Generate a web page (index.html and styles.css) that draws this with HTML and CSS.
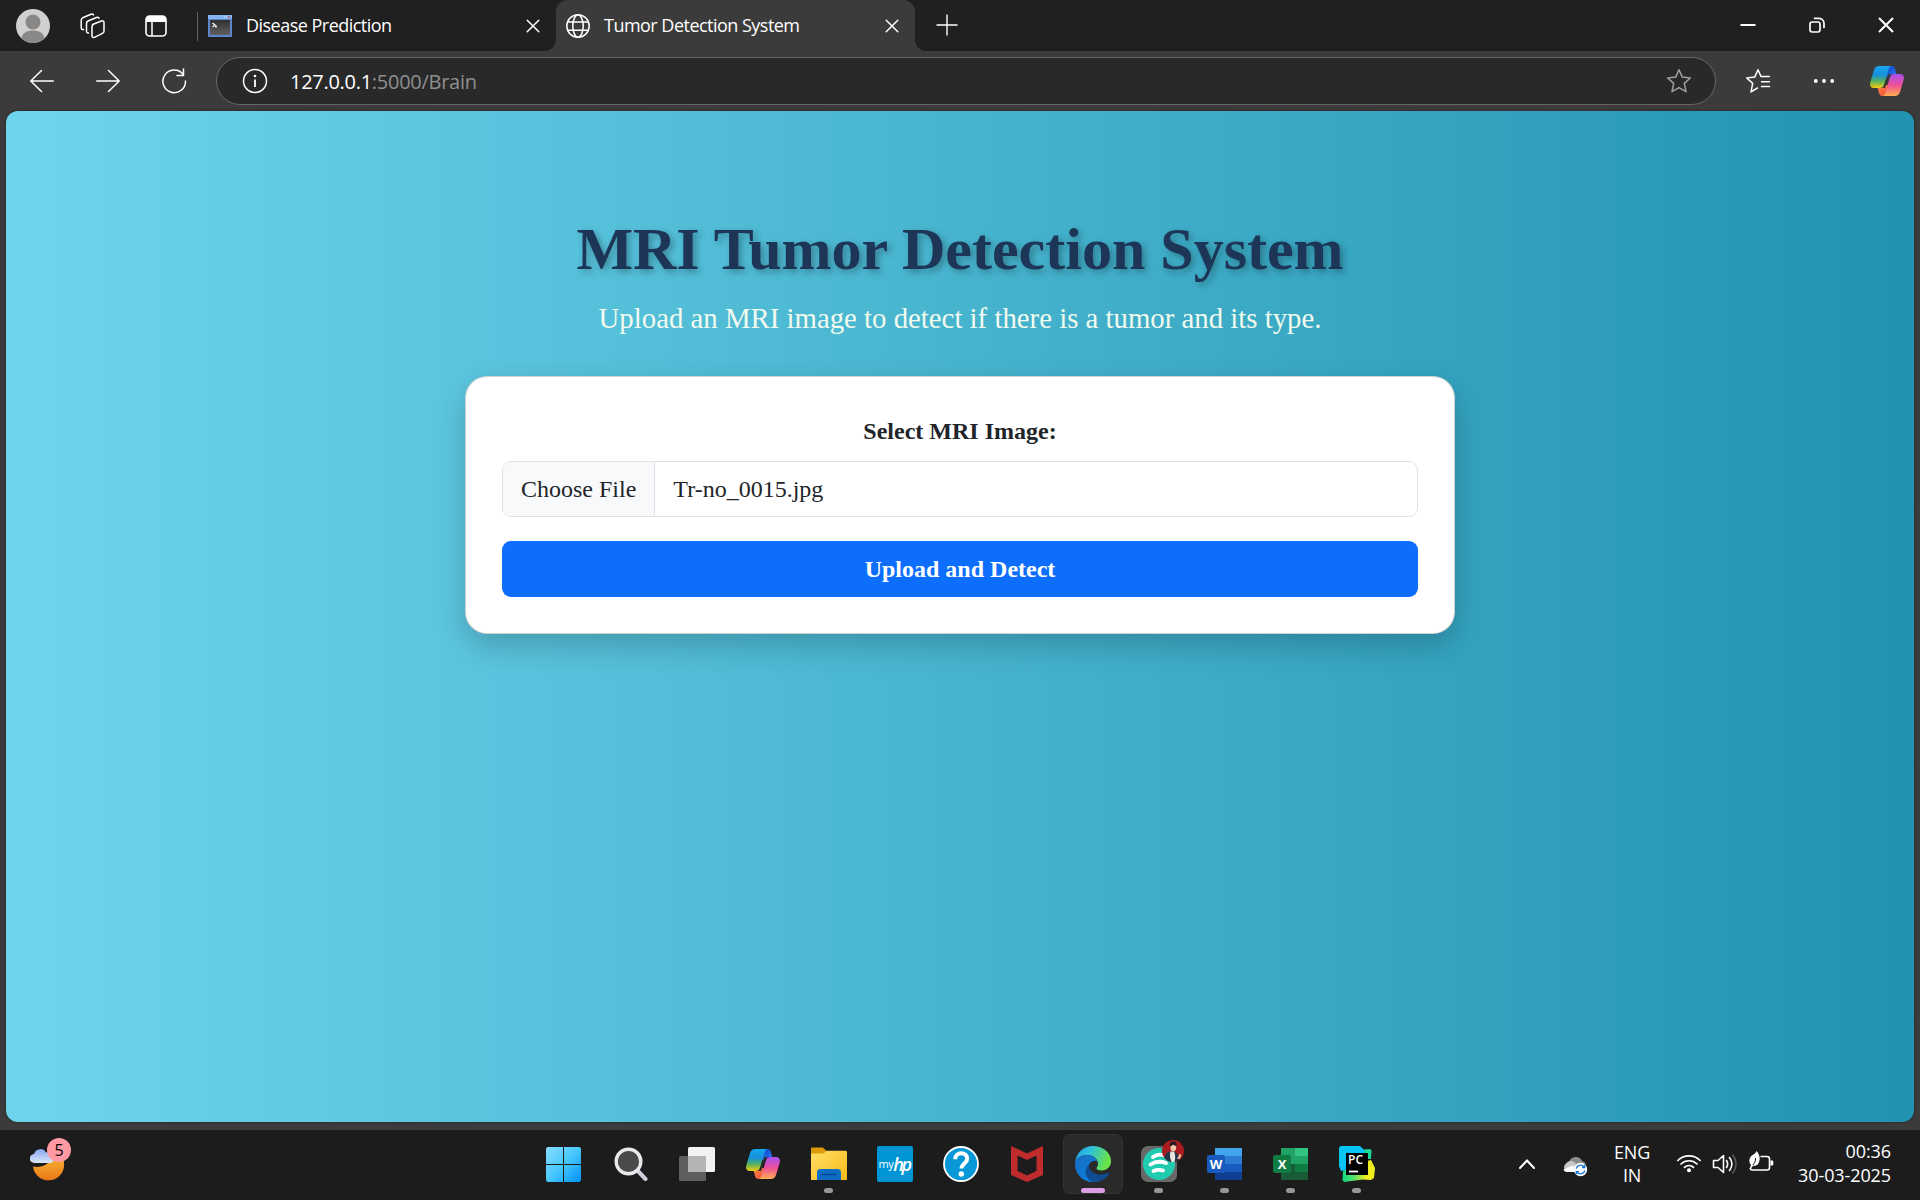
FILE: index.html
```
<!DOCTYPE html>
<html lang="en">
<head>
<meta charset="utf-8">
<title>Tumor Detection System</title>
<link rel="stylesheet" href="styles.css">
</head>
<body>
<svg class="defs" aria-hidden="true">
  <defs>
    <linearGradient id="cpA" x1="0" y1="0" x2="0" y2="1"><stop offset="0" stop-color="#16a6ee"/><stop offset=".4" stop-color="#1690dc"/><stop offset=".68" stop-color="#52b060"/><stop offset="1" stop-color="#f8cc10"/></linearGradient>
    <linearGradient id="cpB" x1="0" y1="0" x2="0" y2="1"><stop offset="0" stop-color="#a950f2"/><stop offset=".5" stop-color="#ee5098"/><stop offset="1" stop-color="#ffad4e"/></linearGradient>
    <linearGradient id="cpC" x1="0" y1="0" x2="1" y2="1"><stop offset="0" stop-color="#0a3cc8"/><stop offset="1" stop-color="#2b7df0"/></linearGradient>
    <linearGradient id="cpD" x1="0" y1="0" x2="1" y2="1"><stop offset="0" stop-color="#ff8c40"/><stop offset="1" stop-color="#ee3f3f"/></linearGradient>
    <symbol id="copilot" viewBox="0 0 34 30">
      <path fill="url(#cpC)" d="M15 0h6.500c2 0 3 1.200 3.500 3l1.300 5h-4.300c-2 0-3.200 1-3.800 3h-4z"/>
      <path fill="url(#cpD)" d="M19 30h-6.500c-2 0-3-1.200-3.500-3l-1.300-5H12c2 0 3.200-1 3.800-3h4z"/>
      <path fill="url(#cpA)" d="M9.500 0H22c-2 .2-2.800 1.500-3.400 3.500l-4.500 15c-.8 2.400-2 3.500-4.500 3.500H4c-3.500 0-4.600-2.500-3.600-6L4 4C4.900 1.300 6.500 0 9.500 0z"/>
      <path fill="url(#cpB)" d="M24.500 30H12c2-.2 2.800-1.500 3.400-3.500l4.500-15c.8-2.400 2-3.500 4.500-3.500H30c3.500 0 4.600 2.500 3.600 6L30 26c-.9 2.700-2.500 4-5.500 4z"/>
      <path fill="#333" d="M18.300 8h1.700c-.7.600-1.100 1.400-1.400 2.500L15 22h-1.200c-.3 0 .3-1 .6-2z"/>
    </symbol>
  </defs>
</svg>

<div class="browser">
  <header class="tabbar">
    <div class="tabbar-tools">
      <svg class="avatar" width="34" height="34" viewBox="0 0 34 34"><circle cx="17" cy="17" r="17" fill="#d2d0ce"/><circle cx="17" cy="13" r="7.500" fill="#8a8886"/><path d="M5.500 29.500C6 24 11 21.500 17 21.500s11 2.500 11.500 8A17 17 0 0 1 17 34 17 17 0 0 1 5.500 29.500z" fill="#8a8886"/></svg>
      <svg class="workspaces" width="26" height="26" viewBox="0 0 26 26" fill="none" stroke="#fff" stroke-width="1.500" stroke-linejoin="round" stroke-linecap="round"><path d="M12.500 11.500l9-3.500c1.500-.5 2.500.2 2.500 1.500v8.500c0 1.200-.5 1.900-1.500 2.300l-7.500 3.900c-1.600.8-3 .2-3-1.500V14c0-1.300.3-2 1.300-2.500z"/><path d="M8.500 20c-1.500.2-2-.6-2-2v-7.500c0-1.300.5-2 1.500-2.500l8.500-3.500c1-.4 2-.2 2.500.6"/><path d="M3.500 16.500c-1.600.3-2.300-.5-2.300-2V7.300c0-1.300.5-2 1.500-2.500L11 1.300c1.200-.5 2-.2 2.500.6"/></svg>
      <svg class="tabactions" width="22" height="22" viewBox="0 0 22 22"><rect x="1" y="1" width="20" height="20" rx="3.500" fill="none" stroke="#fff" stroke-width="1.600"/><path d="M1 7V4.500A3.500 3.500 0 0 1 4.500 1h13A3.500 3.500 0 0 1 21 4.500V7z" fill="#fff"/><path d="M7 7v14" stroke="#fff" stroke-width="1.500"/></svg>
    </div>
    <div class="tab tab-idle">
      <svg width="24" height="22" viewBox="0 0 24 22"><defs><linearGradient id="term" x1="0" y1="0" x2="0" y2="1"><stop offset="0" stop-color="#303030"/><stop offset="1" stop-color="#606060"/></linearGradient></defs><rect width="24" height="22" rx="1" fill="#5b86cc"/><rect width="24" height="4" rx="1" fill="#83b4f0"/><path d="M16 2h1M18 2h1" stroke="#dcebff" stroke-width="1"/><path d="M20 2h1.500" stroke="#e04a3a" stroke-width="1.500"/><rect x="2" y="5" width="20" height="15" fill="url(#term)"/><path d="M4.500 8l2.500 2-2.500 2M7 11.500h2" stroke="#fff" stroke-width="1.300" fill="none"/></svg>
      <span class="tab-title">Disease Prediction</span>
      <svg class="tab-close" width="14" height="14" viewBox="0 0 14 14" stroke="#fff" stroke-width="1.500" stroke-linecap="round"><path d="M1.200 1.200l11.600 11.600M12.800 1.200L1.200 12.800"/></svg>
    </div>
    <div class="tab tab-active">
      <svg width="24" height="24" viewBox="0 0 24 24" fill="none" stroke="#fff" stroke-width="1.500"><circle cx="12" cy="12" r="11.200"/><ellipse cx="12" cy="12" rx="5.200" ry="11.200"/><path d="M1.800 8h20.400M1.800 16.200h20.400"/></svg>
      <span class="tab-title">Tumor Detection System</span>
      <svg class="tab-close" width="14" height="14" viewBox="0 0 14 14" stroke="#fff" stroke-width="1.500" stroke-linecap="round"><path d="M1.200 1.200l11.600 11.600M12.800 1.200L1.200 12.800"/></svg>
    </div>
    <svg class="newtab" width="22" height="22" viewBox="0 0 22 22" stroke="#fff" stroke-width="1.400"><path d="M11 .5v21M.5 11h21"/></svg>
    <div class="window-buttons">
      <svg width="16" height="16" viewBox="0 0 16 16"><path d="M.5 8h15" stroke="#fff" stroke-width="2"/></svg>
      <svg width="16" height="16" viewBox="0 0 16 16" fill="none" stroke="#fff" stroke-width="1.700"><rect x="1" y="5" width="10" height="10" rx="2.200"/><path d="M5.500 1.300H10a5 5 0 0 1 5 5V10.500" stroke-linecap="round"/></svg>
      <svg width="16" height="16" viewBox="0 0 16 16" stroke="#fff" stroke-width="2"><path d="M1 1l14 14M15 1L1 15"/></svg>
    </div>
  </header>

  <nav class="toolbar">
    <div class="nav-buttons">
      <svg width="24" height="24" viewBox="0 0 24 24" fill="none" stroke="#fff" stroke-width="1.500" stroke-linecap="round" stroke-linejoin="round"><path d="M23.300 12H1M11.500 1.500L.8 12l10.700 10.500"/></svg>
      <svg width="24" height="24" viewBox="0 0 24 24" fill="none" stroke="#fff" stroke-width="1.500" stroke-linecap="round" stroke-linejoin="round"><path d="M.7 12H23M12.500 1.500L23.200 12 12.500 22.500"/></svg>
      <svg class="reload" width="26" height="26" viewBox="0 0 26 26" fill="none" stroke="#fff" stroke-width="1.500" stroke-linecap="round" stroke-linejoin="round"><path d="M22 6.300A11.300 11.300 0 1 0 24.500 13M22.500 1v6.500H16"/></svg>
    </div>
    <div class="address">
      <svg width="26" height="26" viewBox="0 0 26 26"><circle cx="13" cy="13" r="11.500" fill="none" stroke="#fff" stroke-width="1.500"/><path d="M13 11.500v7.500" stroke="#fff" stroke-width="1.800"/><circle cx="13" cy="8" r="1.300" fill="#fff"/></svg>
      <span class="url"><span class="host">127.0.0.1</span>:5000/Brain</span>
      <svg width="26" height="26" viewBox="0 0 26 26" fill="none" stroke="#a0a0a0" stroke-width="1.500" stroke-linejoin="round"><path d="M13 1.700l3.300 7.400 8 .9-6 5.400 1.700 8.300-7-4.100-7 4.100 1.700-8.300-6-5.400 8-.9z"/></svg>
    </div>
    <div class="toolbar-actions">
      <svg width="26" height="26" viewBox="0 0 26 26" fill="none" stroke="#fff" stroke-width="1.500" stroke-linejoin="round" stroke-linecap="round"><path d="M24.300 8.500H16L13 1.700 9.700 9.100l-8 .9 6 5.400L6 23.900l6.500-3.900M16.500 13.700h8M16.500 18.500h8"/></svg>
      <svg width="22" height="22" viewBox="0 0 22 22" fill="#fff"><circle cx="2.800" cy="11" r="1.900"/><circle cx="11" cy="11" r="1.900"/><circle cx="19.200" cy="11" r="1.900"/></svg>
      <svg width="34" height="30"><use href="#copilot"/></svg>
    </div>
  </nav>

  <main class="page">
    <h1>MRI Tumor Detection System</h1>
    <p class="lead">Upload an MRI image to detect if there is a tumor and its type.</p>
    <form class="card">
      <label class="form-label">Select MRI Image:</label>
      <div class="file-input"><span class="file-button">Choose File</span><span class="file-name">Tr-no_0015.jpg</span></div>
      <button class="submit" type="button">Upload and Detect</button>
    </form>
  </main>
</div>

<footer class="taskbar">
  <div class="widgets">
    <svg width="44" height="44" viewBox="0 0 44 44"><defs><linearGradient id="moon" x1="0" y1="0" x2="0" y2="1"><stop offset="0" stop-color="#f8b838"/><stop offset="1" stop-color="#ec7818"/></linearGradient><linearGradient id="cloud" x1="0" y1="0" x2="0" y2="1"><stop offset="0" stop-color="#86a8ec"/><stop offset="1" stop-color="#dce8fc"/></linearGradient></defs><path d="M31 12c2 3 3 6 3 9a15.500 15.500 0 0 1-31 3.500c9 2 19-3 19-12.500z" transform="translate(0 4)" fill="url(#moon)"/><path d="M4.500 25a4.500 4.500 0 0 1-.5-9 6.500 6.500 0 0 1 12-1.500 5.500 5.500 0 0 1 5 10.500z" fill="url(#cloud)"/></svg>
    <span class="badge">5</span>
  </div>

  <div class="apps">
    <div class="app start"><svg width="35" height="35" viewBox="0 0 35 35"><defs><linearGradient id="win" x1="0" y1="0" x2="1" y2="1"><stop offset="0" stop-color="#88dcff"/><stop offset=".5" stop-color="#48c8fc"/><stop offset="1" stop-color="#0090f8"/></linearGradient></defs><path fill="url(#win)" d="M1.500 0H17v17H0V1.500zM18 0h15.500L35 1.500V17H18zM0 18h17v17H1.500L0 33.500zM18 18h17v15.500L33.500 35H18z"/></svg></div>
    <div class="app"><svg width="34" height="36" viewBox="0 0 34 36"><path d="M22.500 23.500l9 9.500" stroke="#ccd0d8" stroke-width="4" stroke-linecap="round"/><circle cx="14.500" cy="15.500" r="12.300" fill="#4a4a4a" stroke="#e8e9ec" stroke-width="3.400"/></svg></div>
    <div class="app"><svg width="36" height="36" viewBox="0 0 36 36"><rect x="9" y="1" width="27" height="25" rx="1.500" fill="#f2f2f2"/><rect y="10" width="27" height="25" rx="1.500" fill="#5e5e5e"/><path d="M9 10h18v16H9z" fill="#b4b4b4"/></svg></div>
    <div class="app"><svg width="34" height="30"><use href="#copilot"/></svg></div>
    <div class="app running"><svg width="36" height="36" viewBox="0 0 36 36"><defs><linearGradient id="fold" x1="0" y1="0" x2="1" y2="1"><stop offset="0" stop-color="#ffe068"/><stop offset="1" stop-color="#f8b818"/></linearGradient></defs><path d="M1 1.500h10c1 0 1.500.5 2.500 1.500l2 2v10H0V2.500c0-.6.400-1 1-1z" fill="#dc9a08"/><path d="M0 7.500h11.500c1 0 1.700-.4 2.500-1.200l1.500-1.500h19c.8 0 1.500.7 1.500 1.500V33c0 .6-.4 1-1 1H1c-.6 0-1-.4-1-1z" fill="url(#fold)"/><path d="M6 34V26.500a3.500 3.500 0 0 1 3.500-3.500h17a3.500 3.500 0 0 1 3.500 3.500V34z" fill="#0f6cc4"/><path d="M11 28.500h14" stroke="#0a4a94" stroke-width="1.600" stroke-linecap="round"/></svg></div>
    <div class="app"><div class="hp"><span class="my">my</span><span class="hpmark">hp</span></div></div>
    <div class="app"><svg width="36" height="36" viewBox="0 0 36 36"><circle cx="18" cy="18" r="17" fill="#0898d8" stroke="#fff" stroke-width="1.800"/><path d="M12.200 13.300c0-3.700 2.400-6 6-6s6 2.200 6 5.500c0 4.800-5.700 4.700-5.700 9.800" fill="none" stroke="#fff" stroke-width="4"/><circle cx="18.300" cy="28" r="2.700" fill="#fff"/></svg></div>
    <div class="app"><svg width="32" height="36" viewBox="0 0 32 36"><path fill="#c02c2c" fill-rule="evenodd" d="M0 0l16 7.500L32 0v29l-16 7-16-7zM6.500 9.500v15.500L16 29.500l9.500-4.500V9.500L16 14z"/></svg></div>
    <div class="app current"><svg width="36" height="36" viewBox="0 0 36 36"><defs><linearGradient id="eg1" x1="0" y1="0" x2="1" y2=".3"><stop offset="0" stop-color="#1c9ce0"/><stop offset=".45" stop-color="#30c0dc"/><stop offset="1" stop-color="#68e448"/></linearGradient><linearGradient id="eg2" x1="0" y1="0" x2=".6" y2="1"><stop offset="0" stop-color="#1a6cc0"/><stop offset="1" stop-color="#0a80e0"/></linearGradient></defs><path d="M0 17C1 7 8 0 18 0c10.500 0 18 7 18 15 0 6-4.500 9.500-9 9.500-3.500 0-5.500-1-5.500-2.300 0-1 1.500-1.700 1.500-4.200C23 13 18.500 9 12.500 9 6 9 1.500 12 0 17z" fill="url(#eg1)"/><path d="M0 18C0 12.500 5.500 9 12 9c5.500 0 9.500 3 10.500 6.500C20 13.500 14 15 13.500 21c-.5 7 5 13.500 11 13.500A18 18 0 0 1 18 36C7.500 36 0 28 0 18z" fill="url(#eg2)"/><path d="M13.700 19c-3 2.500-4 6-3 9.500 1.200 4.500 5.300 7.500 9.300 7.500 6.500-.3 11.500-3.500 14-8.500.4-.8-.2-1.300-1-.8-8 4.300-18.500 1.300-19.300-7.700z" fill="#104c94"/></svg></div>
    <div class="app running"><div class="music"><svg width="36" height="36" viewBox="0 0 36 36"><rect width="36" height="36" rx="7" fill="#686868"/><circle cx="18" cy="18" r="16" fill="#20ccb0"/><path d="M12 11c3-2.300 7-3 11-1.600M9.500 18.500c5-3.300 10-3.500 15.500-1.500M12.500 25c3-1.300 6-1.500 9.500-.5" fill="none" stroke="#fff" stroke-width="3.800" stroke-linecap="round"/></svg><svg class="contact" width="22" height="22" viewBox="0 0 22 22"><circle cx="11" cy="11" r="11" fill="#aa1c20"/><path d="M2.500 18c.5-4 3-6.500 6-6.500h3c2.500 0 4 2 5 5l.5 4A11 11 0 0 1 2.500 18z" fill="#24364a"/><path d="M8.500 11.500h3.500c1.500 3 1.500 7 .5 10.400a11 11 0 0 1-3 0c-1.500-3-2-7-1-10.400z" fill="#ece4dc"/><path d="M15 19l2.500-5 1.800.5-1 4z" fill="#f0c09c"/><ellipse cx="11.300" cy="7.500" rx="2.900" ry="3.700" fill="#f4c8a4"/><path d="M7.800 6.500C7.500 2.800 9 1.500 11.500 1.500S15 3.500 14.600 6c-1.800 0-2.800-.8-3.600-1.500-.7 1-1.700 1.700-3.200 2z" fill="#241c24"/></svg></div></div>
    <div class="app running"><div class="office word"><svg width="36" height="34" viewBox="0 0 36 34"><path d="M8 1h27v8H8z" fill="#41a5ee"/><path d="M8 9h27v8H8z" fill="#2b7cd3"/><path d="M8 17h27v8H8z" fill="#185abd"/><path d="M8 25h27v8H8z" fill="#103f91"/></svg><span>W</span></div></div>
    <div class="app running"><div class="office excel"><svg width="36" height="34" viewBox="0 0 36 34"><path d="M8 1h14v16H8z" fill="#21a366"/><path d="M22 1h13v8H22z" fill="#33c481"/><path d="M22 9h13v8H22z" fill="#21a366"/><path d="M8 17h14v8H8z" fill="#185c37"/><path d="M22 17h13v8H22z" fill="#107c41"/><path d="M8 25h27v8H8z" fill="#185c37"/></svg><span>X</span></div></div>
    <div class="app running"><div class="pycharm"><svg width="36" height="36" viewBox="0 0 36 36"><defs><linearGradient id="pc" x1="0" y1="0" x2="1" y2="0"><stop offset="0" stop-color="#10d884"/><stop offset=".4" stop-color="#60e060"/><stop offset=".7" stop-color="#f0ec20"/></linearGradient></defs><path d="M20 4l11-1 1.500 1.500L32 13H20z" fill="#18d898"/><path d="M4 25l24-10 4-1 4 8-1 10-3 2-8-.5-19 2.500-1.500-2z" fill="url(#pc)"/><path d="M1.500 0H21l4 4v12L8 24 2 25 0 20V1.500z" fill="#08c4f4"/><path d="M7 7h22v22H7z"/><path d="M10 25.500h9" stroke="#fff" stroke-width="1.800"/></svg><span>PC</span></div></div>
  </div>

  <div class="tray">
    <svg class="chevron" width="18" height="12" viewBox="0 0 18 12" fill="none" stroke="#fff" stroke-width="2" stroke-linecap="round"><path d="M2 10l7-7.500L16 10"/></svg>
    <svg class="onedrive" width="26" height="22" viewBox="0 0 26 22"><path d="M7 7a7 7 0 0 1 13-1c3 .5 4 3 4 6H7z" fill="#8c8c8c"/><path d="M5 17a5 5 0 0 1-1-8.500 6 6 0 0 1 9-1L17 17z" fill="#c8c8c8"/><path d="M1.500 14.500l9-4L17 17H5c-2 0-3-1-3.500-2.500z" fill="#fff"/><circle cx="18.500" cy="14.500" r="6.700" fill="#fff"/><path d="M14.200 13.700a4.500 4.500 0 0 1 8-1.700M22.800 15.300a4.500 4.500 0 0 1-8 1.700M22.700 9.800v2.700H20M14.300 19.300v-2.700H17" fill="none" stroke="#1a78d0" stroke-width="1.300"/></svg>
    <div class="lang"><span>ENG</span><span>IN</span></div>
    <svg class="wifi" width="26" height="20" viewBox="0 0 26 20" fill="none" stroke="#fff" stroke-width="1.700" stroke-linecap="round"><path d="M1.800 7.500a16 16 0 0 1 22.400 0M5 11a11.500 11.500 0 0 1 16 0M8.500 14.300a6.500 6.500 0 0 1 9 0"/><circle cx="13" cy="17.200" r="2" fill="#fff" stroke="none"/></svg>
    <svg class="sound" width="26" height="22" viewBox="0 0 26 22" fill="none" stroke="#fff" stroke-width="1.600" stroke-linecap="round" stroke-linejoin="round"><path d="M1.500 7.500H6l5.500-5v17l-5.500-5H1.500z"/><path d="M14.500 7.500c1.300 2 1.300 5 0 7M17.500 4.500c3 4 3 9 0 13"/><path d="M20.500 2c4.600 5 4.600 13 0 18" stroke="#5a5a5a"/></svg>
    <svg class="battery" width="26" height="24" viewBox="0 0 26 24"><path d="M12.500 6.500h6.500a2.500 2.500 0 0 1 2.500 2.500v8.500a2.500 2.500 0 0 1-2.500 2.500H4.500c-1.500 0-2.200-.7-2.500-2" fill="none" stroke="#fff" stroke-width="1.600"/><path d="M22.500 10.500H24c.8 0 1.300.5 1.300 1.300v2.400c0 .8-.5 1.300-1.300 1.300h-1.500z" fill="#fff"/><path d="M8.500 1c3.200 3 4.500 8.500 1.700 12.700-1 1.600-3.200 2.500-5.200 2L3 18.500l-1-.7 1-2.800C0 11.500 1.500 7.500 4 5.500 5.800 4 7.700 3.500 8.500 1z" fill="#fff"/><path d="M7.500 8c.2 3-.7 5.200-2.700 7" fill="none" stroke="#1c1c1c" stroke-width="1"/></svg>
    <div class="clock"><span>00:36</span><span>30-03-2025</span></div>
  </div>
</footer>
</body>
</html>
```
FILE: styles.css
```
* { box-sizing: border-box; }
html, body { margin: 0; height: 100%; }
body {
  display: flex;
  flex-direction: column;
  width: 1920px;
  height: 1200px;
  overflow: hidden;
  background: #1c1c1c;
  color: #fff;
  font-family: "Open Sans", "Noto Sans", sans-serif;
}
svg { display: block; flex: none; }
.defs { position: absolute; width: 0; height: 0; }

.browser {
  display: flex;
  flex-direction: column;
  height: 1130px;
  background: #3b3b3b;
}

/* Tab strip */
.tabbar { display: flex; align-items: center; height: 51px; background: #202020; }
.tabbar-tools {
  display: flex;
  align-items: center;
  width: 197px;
  padding-left: 16px;
}
.workspaces { margin-left: 30px; }
.tabactions { margin-left: 39px; }
.tab { display: flex; align-items: center; height: 51px; width: 359px; }
.tab-title { margin: -1px 0 0 14px; font-size: 18px; line-height: 24px; letter-spacing: -.52px; white-space: nowrap; }
.tab-close { margin-left: auto; }
.tab-idle { padding: 0 16px 0 11px; background: linear-gradient(#606060, #606060) 0 12px / 1px 29px no-repeat; }
.tab-active {
  position: relative;
  padding: 0 16px 0 10px;
  background: #3b3b3b;
  border-radius: 12px 12px 0 0;
}
.tab-active::before, .tab-active::after {
  content: "";
  position: absolute;
  bottom: 0;
  width: 11px;
  height: 11px;
}
.tab-active::before { left: -11px; background: radial-gradient(circle at 0 0, #202020 10.500px, #3b3b3b 11.200px); }
.tab-active::after { right: -11px; background: radial-gradient(circle at 100% 0, #202020 10.500px, #3b3b3b 11.200px); }
.newtab { margin: -1px 0 0 21px; }
.window-buttons { display: flex; gap: 53px; margin: -1px 0 0 auto; padding-right: 26px; }

/* Address row */
.toolbar { display: flex; align-items: center; height: 60px; padding-left: 30px; }
.nav-buttons { display: flex; align-items: center; gap: 42px; width: 186px; }
.reload { margin-left: -1px; }
.address {
  display: flex;
  align-items: center;
  width: 1500px;
  height: 48px;
  padding: 0 23px 0 25px;
  border: 1px solid #666;
  border-radius: 24px;
  background: #292929;
}
.url { flex: 1; margin-left: 22px; font-size: 20px; letter-spacing: -.28px; color: #8f8f8f; }
.host { color: #fff; }
.toolbar-actions { display: flex; align-items: center; margin-left: 29px; }
.toolbar-actions svg + svg { margin-left: 42px; }
.toolbar-actions svg:last-child { margin-left: 35px; }

/* Web page */
.page {
  display: flex;
  flex-direction: column;
  align-items: center;
  height: 1011px;
  margin: 0 6px;
  padding-top: 102px;
  border-radius: 12px;
  background: linear-gradient(to right, #6dd5ed, #2193b0);
  box-shadow: 0 0 3px rgba(0, 0, 0, .45);
  font-family: "Liberation Serif", serif;
}
h1 {
  margin: 0 0 12px;
  font-size: 60px;
  line-height: 72px;
  font-weight: 700;
  color: #1d3557;
  text-shadow: 3px 3px 7px rgba(0, 0, 0, .3);
}
.lead { margin: 0 0 36px; font-size: 28.800px; line-height: 43px; color: #f1faee; }
.card {
  display: flex;
  flex-direction: column;
  width: 990px;
  height: 258px;
  padding: 36px;
  border: 1px solid rgba(0, 0, 0, .175);
  border-radius: 22px;
  background: #fff;
  box-shadow: 0 12px 30px rgba(0, 0, 0, .2);
  color: #212529;
  font-size: 24px;
  line-height: 36px;
}
.form-label { margin-bottom: 12px; font-weight: 700; text-align: center; }
.file-input {
  display: flex;
  height: 56px;
  margin-bottom: 24px;
  border: 1px solid #dee2e6;
  border-radius: 9px;
  overflow: hidden;
}
.file-button { padding: 9px 18px; border-right: 1px solid #dee2e6; background: #f8f9fa; }
.file-name { padding: 9px 18px; }
.submit {
  height: 56px;
  padding: 0;
  border: 0;
  border-radius: 9px;
  background: #0d6efd;
  color: #fff;
  font: 700 24px/36px "Liberation Serif", serif;
}

/* Taskbar */
.taskbar {
  display: grid;
  grid-template-columns: 530px 860px 1fr;
  height: 70px;
  background: #1c1c1c;
}
.widgets { position: relative; padding: 8px 0 0 30px; }
.badge {
  position: absolute;
  left: 47px;
  top: 8px;
  width: 24px;
  height: 24px;
  border-radius: 50%;
  background: #ff99a4;
  color: #000;
  font-size: 16px;
  line-height: 24px;
  text-align: center;
}
.apps { display: flex; gap: 6px; padding: 4px 0 6px 5px; }
.app { position: relative; display: flex; align-items: center; justify-content: center; width: 60px; height: 60px; border-radius: 7px; }
.app.start { padding-right: 3px; }
.app.current { background: #2a2a2a; border: 1px solid #343434; }
.running::after, .current::after {
  content: "";
  position: absolute;
  left: 25px;
  bottom: 1px;
  width: 9px;
  height: 5px;
  border-radius: 3px;
  background: #969696;
}
.current::after { left: 17px; bottom: 0; width: 24px; background: #dc9fe4; }
.hp {
  display: flex;
  align-items: center;
  justify-content: center;
  width: 36px;
  height: 36px;
  border-radius: 2px;
  background: #0096d6;
  line-height: 20px;
}
.my { font-size: 11px; letter-spacing: -.5px; }
.hpmark { font: italic 600 18px/20px "Open Sans", sans-serif; letter-spacing: -2.500px; padding-right: 2px; }
.music { position: relative; }
.contact { position: absolute; left: 21px; top: -6px; }
.office, .pycharm { position: relative; }
.office span {
  position: absolute;
  left: 0;
  top: 8px;
  width: 18px;
  height: 18px;
  border-radius: 2px;
  font: 700 13px/18px "Open Sans", sans-serif;
  text-align: center;
}
.word span { background: #185abd; }
.excel span { background: #107c41; }
.pycharm span { position: absolute; left: 9px; top: 8px; font: 600 12px/12px "Open Sans", sans-serif; }

.tray { display: flex; align-items: center; padding-left: 128px; font-size: 18px; line-height: 24px; }
.chevron { margin-top: -2px; }
.onedrive { margin: 2px 0 0 26px; }
.lang { display: flex; flex-direction: column; align-items: center; width: 36px; margin: -3px 0 0 26px; line-height: 23px; letter-spacing: -.2px; }
.wifi { margin: -4px 0 0 26px; }
.sound { margin: -2px 0 0 10px; }
.battery { margin: -6px 0 0 10px; }
.clock { display: flex; flex-direction: column; align-items: flex-end; margin: -4px 0 0 auto; padding-right: 29px; letter-spacing: -.1px; }
```
